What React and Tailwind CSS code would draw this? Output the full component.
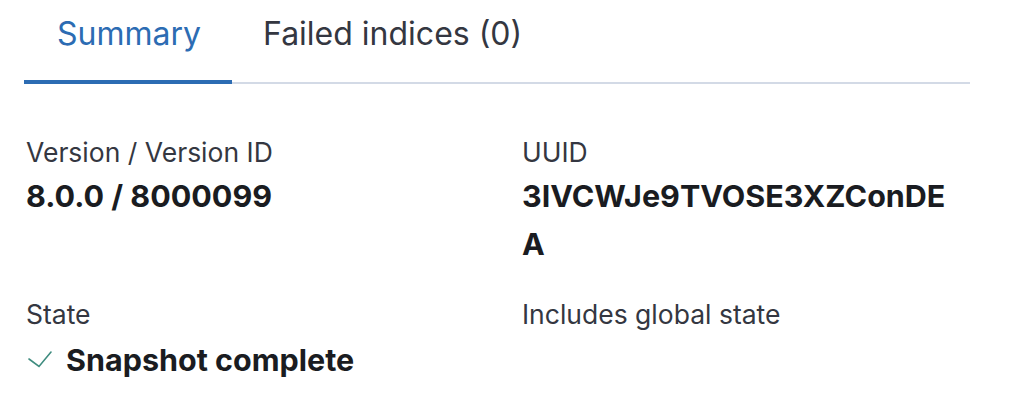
import React from "react";

function Label({ children }) {
  return <div className="text-[26.5px] leading-[40px] text-[#343741]">{children}</div>;
}

function Field({ label, children }) {
  return (
    <div className="flex flex-col min-w-0">
      <Label>{label}</Label>
      <div className="text-[30.5px] leading-[48px] font-bold text-[#1a1c21] break-all">{children}</div>
    </div>
  );
}

export default function App() {
  return (
    <div className="w-[1016px] h-[416px] bg-white pl-[24px] pr-[46px] overflow-hidden" style={{ fontFamily: "Inter, 'Noto Sans', sans-serif" }}>
      <div className="flex border-b-2 border-[#d3dae6]">
        <div className="-mb-[2px] border-b-4 border-[#2c6cb3] pl-[33px] pr-[31px] pt-[14px] h-[84px] text-[32px] leading-[40px] text-[#2c6cb3]">
          Summary
        </div>
        <div className="-mb-[2px] border-b-4 border-transparent pl-[31px] pr-[32px] pt-[14px] h-[84px] text-[32px] leading-[40px] text-[#343741]">
          Failed indices (0)
        </div>
      </div>
      <div className="grid grid-cols-[448px_436px] gap-x-[48px] gap-y-[26px] pt-[48px] pl-[2px]">
        <Field label="Version / Version ID">8.0.0 / 8000099</Field>
        <Field label="UUID">3IVCWJe9TVOSE3XZConDEA</Field>
        <div className="flex flex-col">
          <Label>State</Label>
          <div className="mt-[2px] flex items-center gap-[14px] text-[30.5px] leading-[48px] font-bold text-[#1a1c21]">
            <svg width="24" height="24" viewBox="0 0 24 24" className="ml-[2px] shrink-0" fill="none">
              <path d="M1 11 L11 18.5 L23 4" stroke="#3f8c7f" strokeWidth="1.6" strokeLinecap="round" strokeLinejoin="miter" />
            </svg>
            <span>Snapshot complete</span>
          </div>
        </div>
        <div className="flex flex-col">
          <Label>Includes global state</Label>
        </div>
      </div>
    </div>
  );
}
